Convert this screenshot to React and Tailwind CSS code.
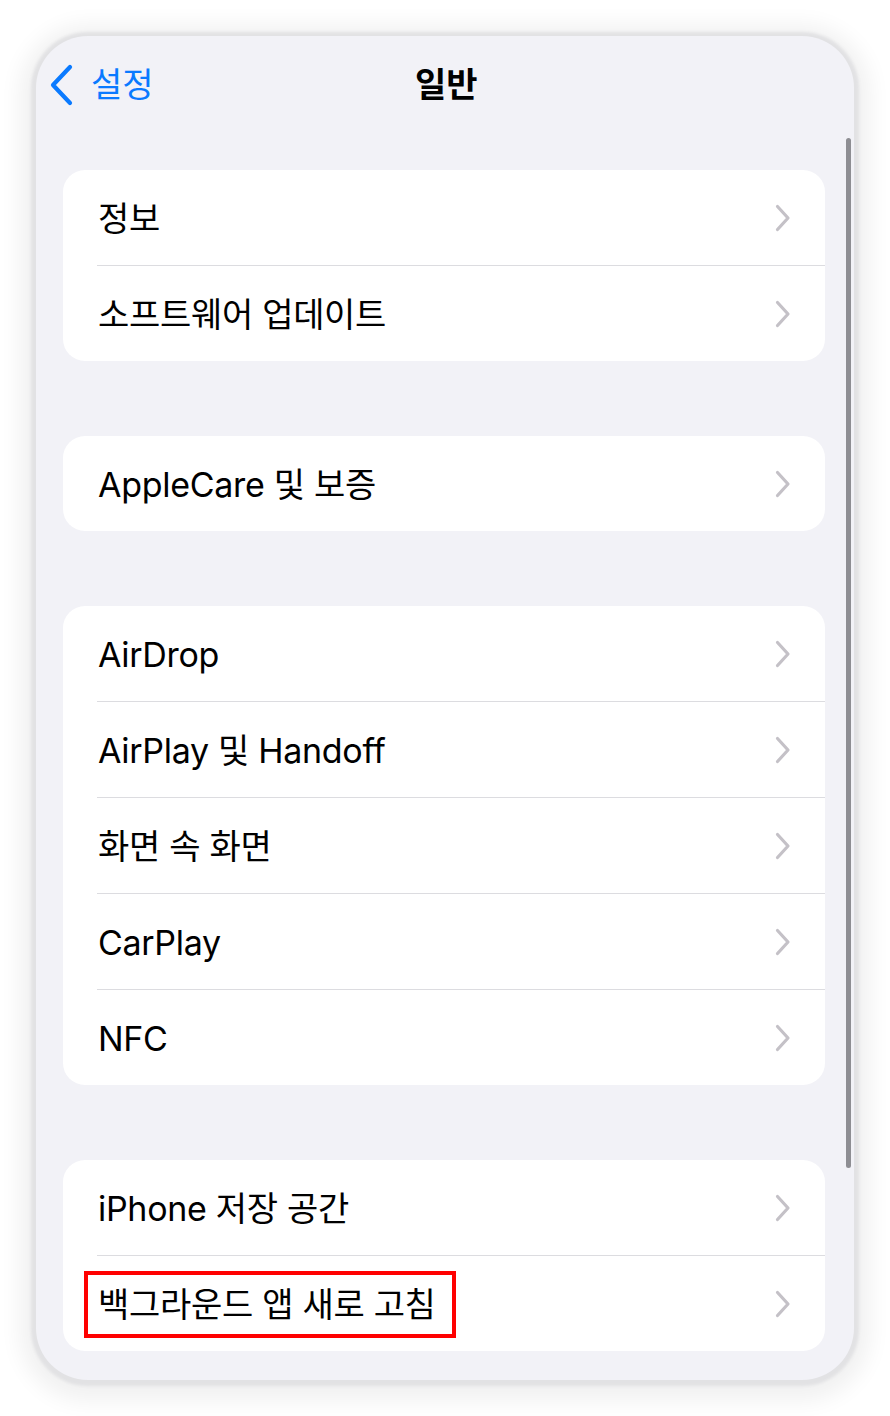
import React from 'react';

const font = { fontFamily: 'Inter, "Noto Sans CJK KR", sans-serif' };

const Chevron = () => (
    <svg width="16" height="28" viewBox="0 0 16 28" fill="none" className="shrink-0">
        <path d="M2.5 2.5 L13 14 L2.5 25.5" stroke="#c4c1c7" strokeWidth="3.2" strokeLinecap="round" strokeLinejoin="round" />
    </svg>
);

const Row = ({ label, last, highlight }) => (
    <div className="flex flex-col">
        <div className="relative flex h-[95px] items-center pl-[35px] pr-[34px]">
            <span className="flex-1 pt-[3px] text-[34px] leading-none tracking-[-0.3px] text-black">{label}</span>
            <Chevron />
            {highlight && (
                <div className="absolute left-[21px] top-[15px] h-[67px] w-[372px] border-[4px] border-[#ff0000]" />
            )}
        </div>
        {!last && <div className="ml-[34px] h-px bg-[#dcdce0]" />}
    </div>
);

const Card = ({ items, highlightIndex }) => (
    <div className="overflow-hidden rounded-[22px] bg-white">
        {items.map((item, i) => (
            <Row key={item} label={item} last={i === items.length - 1} highlight={i === highlightIndex} />
        ))}
    </div>
);

export default function App() {
    return (
        <div className="h-[1416px] w-[890px] bg-white pl-[36px] pt-[36px]" style={font}>
            <div className="relative h-[1344px] w-[818px] overflow-hidden rounded-[52px] bg-[#f2f2f7] shadow-[0_1px_3px_5px_#e2e2e4,0_5px_22px_16px_rgba(0,0,0,0.06)]">
                {/* nav bar */}
                <div className="relative flex h-[96px] items-center">
                    <div className="flex items-center pl-[12px] pt-[2px]">
                        <svg width="26" height="42" viewBox="0 0 26 42" fill="none">
                            <path d="M22 3 L5 21 L22 39" stroke="#0a7aff" strokeWidth="4.2" strokeLinecap="round" strokeLinejoin="round" />
                        </svg>
                        <span className="ml-[17px] text-[34px] leading-none text-[#0a7aff]">설정</span>
                    </div>
                    <span className="absolute left-[379px] pt-[2px] text-[34px] font-semibold leading-none text-black">일반</span>
                </div>

                {/* scroll indicator */}
                <div className="absolute right-[3px] top-[102px] h-[1030px] w-[5px] rounded-full bg-[#8e8e93]" />

                <div className="flex flex-col gap-[75px] pl-[27px] pr-[29px] pt-[38px]">
                    <Card items={['정보', '소프트웨어 업데이트']} />
                    <Card items={['AppleCare 및 보증']} />
                    <Card items={['AirDrop', 'AirPlay 및 Handoff', '화면 속 화면', 'CarPlay', 'NFC']} />
                    <Card items={['iPhone 저장 공간', '백그라운드 앱 새로 고침']} highlightIndex={1} />
                </div>
            </div>
        </div>
    );
}
